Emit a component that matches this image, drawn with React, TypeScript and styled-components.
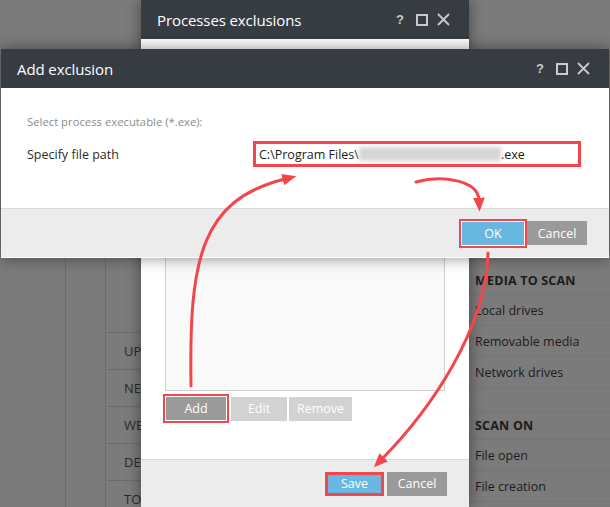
import React from "react";
import styled, { createGlobalStyle } from "styled-components";

const Global = createGlobalStyle`
  html, body { margin: 0; padding: 0; }
  body {
    font-family: "Open Sans", "Noto Sans", "DejaVu Sans", sans-serif;
    background: #7b7b7b;
  }
`;

const RED = "#f2464c";
const BLUE = "#68b7e0";

const Desktop = styled.div`
  position: relative;
  width: 610px;
  height: 507px;
  overflow: hidden;
  background: #7b7b7b;
`;

/* ---------- dimmed application behind the dialogs ---------- */
const AppBackdrop = styled.div`
  display: grid;
  grid-template-columns: 66px 40px 363px 1fr;
  height: 507px;
  padding-top: 50px;
  box-sizing: border-box;
`;

const SideColumn = styled.div`
  border-right: 1px solid #6c6c6c;
`;

const TableColumn = styled.div`
  display: flex;
  flex-direction: column;
  padding-top: 282px;
`;

const TableRow = styled.div`
  height: 37px;
  flex: none;
  border-top: 1px solid #6c6c6c;
  display: flex;
  align-items: center;
  padding-left: 18px;
  font-size: 13px;
  color: #2a2a2a;
  box-sizing: border-box;
`;

const RightPanel = styled.div`
  display: flex;
  flex-direction: column;
  padding-top: 217px;
`;

const PanelRow = styled.div<{ $head?: boolean; $gap?: boolean }>`
  height: ${(p) => (p.$gap ? 24 : p.$head ? 28 : 31)}px;
  flex: none;
  display: flex;
  align-items: center;
  padding-left: 6px;
  font-size: 12.5px;
  font-weight: ${(p) => (p.$head ? 700 : 400)};
  letter-spacing: ${(p) => (p.$head ? "0.2px" : "0")};
  color: #1c1c1c;
  border-bottom: 1px solid rgba(0, 0, 0, 0.035);
  box-sizing: border-box;
  white-space: nowrap;
`;

/* ---------- dialog windows ---------- */
const Window = styled.div<{ $left: number; $top: number; $w: number; $h: number }>`
  position: absolute;
  left: ${(p) => p.$left}px;
  top: ${(p) => p.$top}px;
  width: ${(p) => p.$w}px;
  height: ${(p) => p.$h}px;
  display: flex;
  flex-direction: column;
  background: #ffffff;
  box-shadow: 0 0 14px rgba(0, 0, 0, 0.45);
  box-sizing: border-box;
`;

const TitleBar = styled.div`
  height: 39px;
  flex: none;
  display: flex;
  align-items: center;
  padding: 0 19px 0 16px;
  background: #373c43;
  color: #ffffff;
`;

const Title = styled.div`
  flex: 1;
  font-size: 15px;
  letter-spacing: -0.1px;
`;

const TitleIcons = styled.div`
  display: flex;
  align-items: center;
  gap: 9px;
  color: #c9cacc;
`;

const HelpGlyph = styled.span`
  font-family: "Liberation Sans", Arial, sans-serif;
  font-weight: 700;
  font-size: 13px;
  line-height: 1;
  margin-right: 3px;
`;

const Footer = styled.div<{ $h: number; $gap: number }>`
  height: ${(p) => p.$h}px;
  flex: none;
  display: flex;
  align-items: center;
  justify-content: flex-end;
  gap: ${(p) => p.$gap}px;
  padding: 0 22px;
  background: #ececec;
  border-top: 1px solid #dadada;
  box-sizing: border-box;
`;

const Button = styled.button<{ $kind: "blue" | "gray" | "light"; $w: number; $mark?: boolean }>`
  width: ${(p) => p.$w}px;
  height: 24px;
  border: none;
  margin: 0;
  padding: 0;
  font-family: inherit;
  font-size: 12.5px;
  color: #ffffff;
  background: ${(p) => (p.$kind === "blue" ? BLUE : p.$kind === "gray" ? "#9a9a9a" : "#d2d2d2")};
  box-shadow: ${(p) => (p.$mark ? `inset 0 0 0 3px ${RED}` : "none")};
`;

const Highlight = styled.div`
  display: flex;
  border: 2px solid ${RED};
  padding: 1px;
  background: #ffffff;
`;

const HighlightButton = styled(Button)`
  height: 23px;
`;

/* Add exclusion content */
const AddBody = styled.div`
  height: 120px;
  flex: none;
  padding: 27px 29px 0 26px;
  box-sizing: border-box;
`;

const Hint = styled.div`
  font-size: 11.3px;
  color: #8c8c8c;
  line-height: 14px;
`;

const FieldRow = styled.div`
  display: grid;
  grid-template-columns: 226px 328px;
  align-items: center;
  margin-top: 12px;
`;

const FieldLabel = styled.div`
  font-size: 12.5px;
  color: #2b2b2b;
`;

const PathInput = styled.div`
  height: 26px;
  box-sizing: border-box;
  border: 3px solid ${RED};
  display: flex;
  align-items: center;
  padding-left: 3px;
  font-size: 12.5px;
  color: #1b1b1b;
  white-space: nowrap;
  overflow: hidden;
`;

const Redacted = styled.span`
  display: inline-block;
  width: 142px;
  height: 14px;
  background: #d6d6d6;
  filter: blur(2px);
  flex: none;
`;

/* Processes exclusions content */
const ProcBody = styled.div`
  flex: 1;
  display: flex;
  flex-direction: column;
  padding: 21px 24px 0 24px;
`;

const ListBox = styled.div`
  height: 331px;
  flex: none;
  border: 1px solid #cfcfcf;
  background: #f9f9f9;
  box-sizing: border-box;
`;

const ButtonRow = styled.div`
  display: flex;
  align-items: center;
  gap: 2px;
  margin-top: 3px;
  margin-left: -2px;
`;

const Arrows = styled.svg`
  position: absolute;
  left: 0;
  top: 0;
  pointer-events: none;
`;

const SquareIcon = () => (
  <svg width="12" height="12" viewBox="0 0 12 12">
    <rect x="1" y="1" width="10" height="10" fill="none" stroke="currentColor" strokeWidth="2" />
  </svg>
);

const CloseIcon = () => (
  <svg width="13" height="13" viewBox="0 0 13 13">
    <path d="M1 1 L12 12 M12 1 L1 12" stroke="currentColor" strokeWidth="1.8" />
  </svg>
);

const WindowControls = () => (
  <TitleIcons>
    <HelpGlyph>?</HelpGlyph>
    <SquareIcon />
    <CloseIcon />
  </TitleIcons>
);

export default function App() {
  return (
    <>
      <Global />
      <Desktop>
        <AppBackdrop>
          <SideColumn />
          <SideColumn />
          <TableColumn>
            <TableRow>UPDATE</TableRow>
            <TableRow>NETWORK</TableRow>
            <TableRow>WEB</TableRow>
            <TableRow>DEVICE</TableRow>
            <TableRow>TOOLS</TableRow>
          </TableColumn>
          <RightPanel>
            <PanelRow $head>MEDIA TO SCAN</PanelRow>
            <PanelRow>Local drives</PanelRow>
            <PanelRow>Removable media</PanelRow>
            <PanelRow>Network drives</PanelRow>
            <PanelRow $gap />
            <PanelRow $head>SCAN ON</PanelRow>
            <PanelRow>File open</PanelRow>
            <PanelRow>File creation</PanelRow>
          </RightPanel>
        </AppBackdrop>

        <Window $left={141} $top={0} $w={328} $h={507}>
          <TitleBar>
            <Title>Processes exclusions</Title>
            <WindowControls />
          </TitleBar>
          <ProcBody>
            <ListBox />
            <ButtonRow>
              <Highlight>
                <HighlightButton $kind="gray" $w={60}>Add</HighlightButton>
              </Highlight>
              <Button $kind="light" $w={56}>Edit</Button>
              <Button $kind="light" $w={63}>Remove</Button>
            </ButtonRow>
          </ProcBody>
          <Footer $h={48} $gap={3}>
            <Button $kind="blue" $w={59} $mark>Save</Button>
            <Button $kind="gray" $w={60}>Cancel</Button>
          </Footer>
        </Window>

        <Window $left={1} $top={49} $w={608} $h={209}>
          <TitleBar>
            <Title>Add exclusion</Title>
            <WindowControls />
          </TitleBar>
          <AddBody>
            <Hint>Select process executable (*.exe):</Hint>
            <FieldRow>
              <FieldLabel>Specify file path</FieldLabel>
              <PathInput>
                C:\Program Files\
                <Redacted />
                .exe
              </PathInput>
            </FieldRow>
          </AddBody>
          <Footer $h={49} $gap={0}>
            <Highlight>
              <HighlightButton $kind="blue" $w={62}>OK</HighlightButton>
            </Highlight>
            <Button $kind="gray" $w={60}>Cancel</Button>
          </Footer>
        </Window>

        <Arrows width="610" height="507" viewBox="0 0 610 507">
          <defs>
            <marker
              id="head"
              markerUnits="userSpaceOnUse"
              markerWidth="14"
              markerHeight="14"
              viewBox="0 0 12 12"
              refX="2"
              refY="6"
              orient="auto"
            >
              <path d="M0 1 L12 6 L0 11 Z" fill={RED} />
            </marker>
          </defs>
          <g fill="none" stroke={RED} strokeWidth="3" strokeLinecap="round">
            <path d="M191 386 C189 260, 200 200, 285 179" markerEnd="url(#head)" />
            <path d="M416 182 C442 175, 478 180, 479 200" markerEnd="url(#head)" />
            <path d="M488 253 C486 330, 430 410, 382 459" markerEnd="url(#head)" />
          </g>
        </Arrows>
      </Desktop>
    </>
  );
}
